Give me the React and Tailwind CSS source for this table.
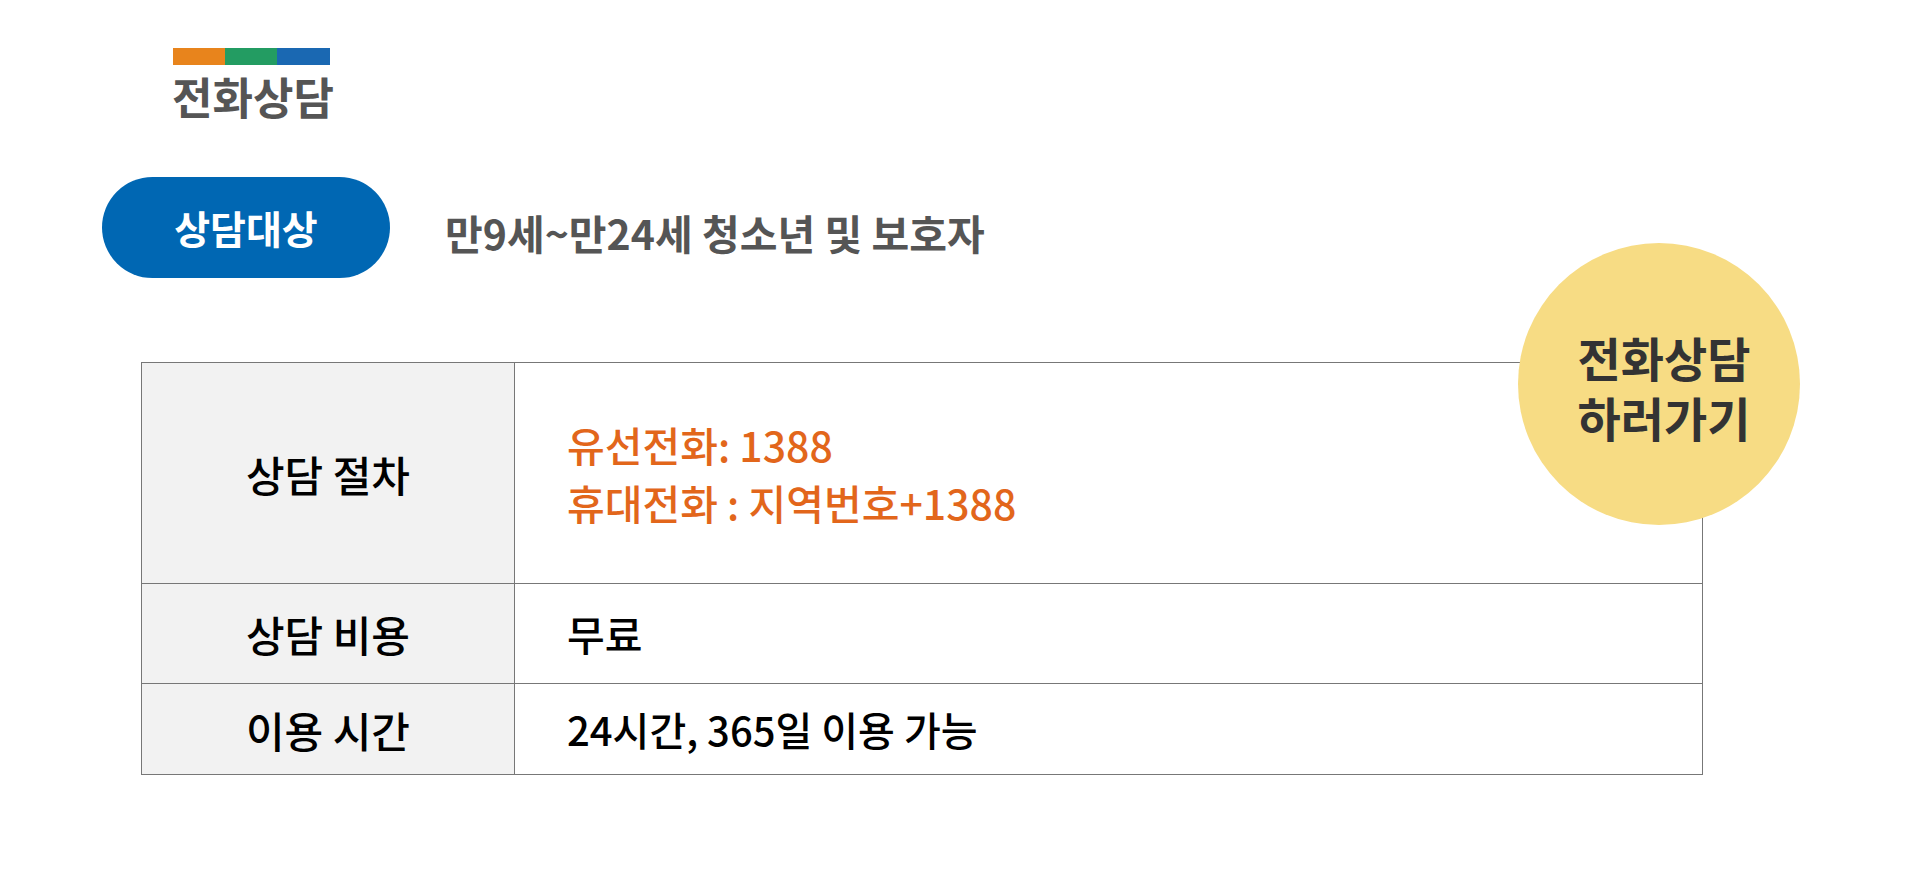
export default function App() {
  const font = { fontFamily: '"Noto Sans CJK KR", "Noto Sans", sans-serif' };
  const rows = [
    {
      label: "상담 절차",
      h: "h-[220px]",
      content: (
        <div className="text-[41px] leading-[58px] font-medium text-[#e2661b]">
          유선전화: 1388
          <br />
          휴대전화 : 지역번호+1388
        </div>
      ),
    },
    {
      label: "상담 비용",
      h: "h-[100px]",
      content: <span className="text-[41px] font-medium text-black">무료</span>,
    },
    {
      label: "이용 시간",
      h: "h-[91px]",
      content: <span className="text-[40px] font-medium text-black">24시간, 365일 이용 가능</span>,
    },
  ];
  return (
    <div className="relative w-full h-[876px] bg-white overflow-hidden" style={font}>
      <div className="flex flex-col pt-[48px]">
        <div className="ml-[173px] flex w-[157px] h-[17px]">
          <div className="w-[52px] h-full bg-[#e8841c]" />
          <div className="w-[52px] h-full bg-[#239c62]" />
          <div className="w-[53px] h-full bg-[#1a68b2]" />
        </div>
        <div className="ml-[172px] mt-[5px] text-[44px] leading-[52px] font-bold text-[#555555]">
          전화상담
        </div>
        <div className="ml-[102px] mt-[55px] flex items-center">
          <div className="w-[288px] h-[101px] rounded-full bg-[#0067b3] flex items-center justify-center">
            <span className="text-[39px] font-bold text-white">상담대상</span>
          </div>
          <div className="ml-[55px] pt-[10px] text-[41px] font-bold text-[#555555]">
            만9세~만24세 청소년 및 보호자
          </div>
        </div>
        <div className="ml-[141px] mt-[84px] w-[1562px] border border-[#777777] flex flex-col">
          {rows.map((r, i) => (
            <div
              key={i}
              className={`grid grid-cols-[372px_1fr] ${r.h} ${i > 0 ? "border-t border-[#777777]" : ""}`}
            >
              <div className="bg-[#f2f2f2] flex items-center justify-center">
                <span className="text-[42px] font-medium text-black">{r.label}</span>
              </div>
              <div className="border-l border-[#777777] flex items-center pl-[52px]">{r.content}</div>
            </div>
          ))}
        </div>
      </div>
      <div className="absolute left-[1518px] top-[243px] w-[282px] h-[282px] rounded-full bg-[#f7dc84] flex items-center justify-center pt-[6px] pl-[10px]">
        <div className="text-center text-[47px] leading-[60px] font-bold text-[#333333]">
          전화상담
          <br />
          하러가기
        </div>
      </div>
    </div>
  );
}
